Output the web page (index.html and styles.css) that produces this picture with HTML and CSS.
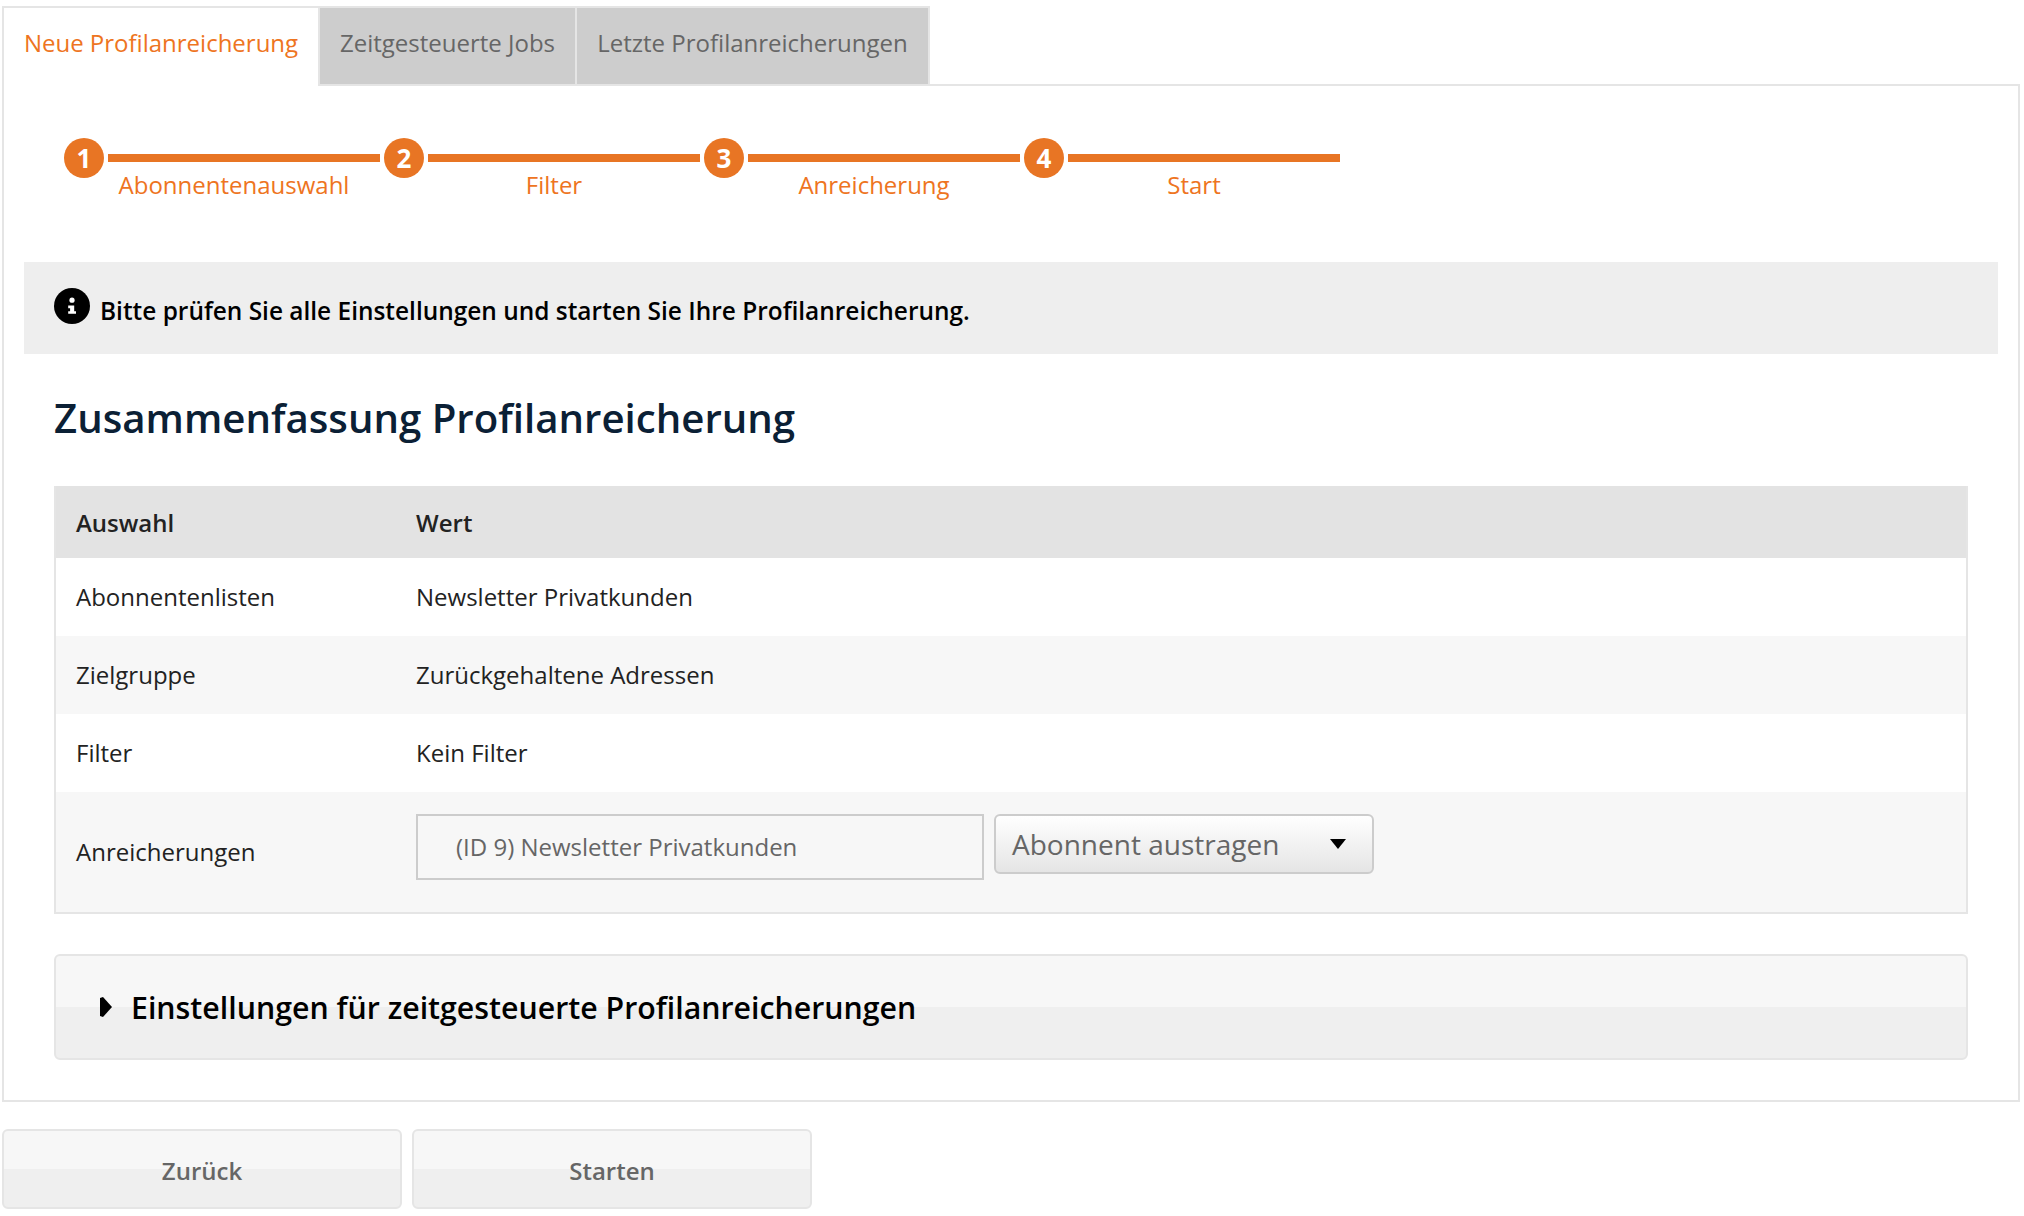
FILE: index.html
```html
<!DOCTYPE html>
<html lang="de">
<head>
    <meta charset="UTF-8">
    <title>Neue Profilanreicherung</title>
    <link rel="stylesheet" href="styles.css">
</head>
<body>
    <div class="page">
        <div class="tabs">
            <div class="tab tab-active">Neue Profilanreicherung</div>
            <div class="tab tab-second">Zeitgesteuerte Jobs</div>
            <div class="tab tab-third">Letzte Profilanreicherungen</div>
        </div>

        <div class="panel">
            <!-- Schritte -->
            <div class="steps">
                <div class="step">
                    <div class="step-head"><span class="step-num">1</span><span class="step-line"></span></div>
                    <div class="step-label">Abonnentenauswahl</div>
                </div>
                <div class="step">
                    <div class="step-head"><span class="step-num">2</span><span class="step-line"></span></div>
                    <div class="step-label">Filter</div>
                </div>
                <div class="step">
                    <div class="step-head"><span class="step-num">3</span><span class="step-line"></span></div>
                    <div class="step-label">Anreicherung</div>
                </div>
                <div class="step">
                    <div class="step-head"><span class="step-num">4</span><span class="step-line"></span></div>
                    <div class="step-label">Start</div>
                </div>
            </div>

            <div class="info">
                <svg class="info-icon" viewBox="0 0 36 36" width="36" height="36">
                    <circle cx="18" cy="18" r="18" fill="#000"/>
                    <circle cx="18" cy="12.2" r="2.6" fill="#fff"/>
                    <path d="M14.2 17.6h6v5.6h1.8v2.6h-7.8v-2.6h1.9v-3h-1.9z" fill="#fff"/>
                </svg>
                <span class="info-text">Bitte prüfen Sie alle Einstellungen und starten Sie Ihre Profilanreicherung.</span>
            </div>

            <h1 class="title">Zusammenfassung Profilanreicherung</h1>

            <table class="summary">
                <thead>
                    <tr><th class="col-name">Auswahl</th><th>Wert</th></tr>
                </thead>
                <tbody>
                    <tr><td>Abonnentenlisten</td><td>Newsletter Privatkunden</td></tr>
                    <tr class="row-alt"><td>Zielgruppe</td><td>Zurückgehaltene Adressen</td></tr>
                    <tr><td>Filter</td><td>Kein Filter</td></tr>
                    <tr class="row-alt row-last">
                        <td>Anreicherungen</td>
                        <td>
                            <div class="enrich">
                                <div class="enrich-input">(ID 9) Newsletter Privatkunden</div>
                                <div class="enrich-select">
                                    <span>Abonnent austragen</span>
                                    <svg class="caret" viewBox="0 0 16 10" width="16" height="10"><path d="M0 0h16L8 10z" fill="#000"/></svg>
                                </div>
                            </div>
                        </td>
                    </tr>
                </tbody>
            </table>

            <div class="accordion">
                <svg class="arrow" viewBox="0 0 12 20" width="12" height="20"><path d="M0 1l3-1 9 10-9 10-3-1z" fill="#000"/></svg>
                <span>Einstellungen für zeitgesteuerte Profilanreicherungen</span>
            </div>
        </div>

        <div class="actions">
            <button class="btn">Zurück</button>
            <button class="btn">Starten</button>
        </div>
    </div>
</body>
</html>
```

FILE: styles.css
```css
body {
    margin: 0;
    padding: 0;
    background-color: #fff;
    font-family: "Open Sans", sans-serif;
    font-size: 24px;
    color: #222;
}
.page {
    width: 2018px;
    margin-left: 2px;
    padding-top: 6px;
}
.tabs {
    display: flex;
    height: 78px;
}
.tab {
    box-sizing: border-box;
    height: 78px;
    line-height: 70px;
    border-top: 2px solid #e5e5e5;
    background-color: #cdcdcd;
    color: #666;
    text-align: center;
}
.tab-active {
    width: 318px;
    height: 80px;
    position: relative;
    background-color: #fff;
    color: #ee7421;
    border-left: 2px solid #e5e5e5;
    border-right: 2px solid #e5e5e5;
}
.tab-second {
    width: 257px;
    border-right: 2px solid #e5e5e5;
}
.tab-third {
    width: 353px;
    border-right: 2px solid #e5e5e5;
}
.panel {
    box-sizing: border-box;
    height: 1018px;
    border: 2px solid #e5e5e5;
    padding: 0 20px;
}
.steps {
    display: flex;
    padding: 52px 0 0 40px;
    height: 176px;
    box-sizing: border-box;
}
.step {
    width: 320px;
}
.step-head {
    display: flex;
    align-items: center;
    height: 40px;
}
.step-num {
    width: 40px;
    height: 40px;
    line-height: 40px;
    border-radius: 50%;
    background-color: #e87524;
    color: #fff;
    font-size: 26px;
    font-weight: 700;
    text-align: center;
}
.step-line {
    width: 272px;
    height: 8px;
    margin-left: 4px;
    background-color: #e87524;
}
.step-label {
    padding-left: 20px;
    color: #ee7421;
    text-align: center;
    line-height: 32px;
    margin-top: -9px;
}
.info {
    display: flex;
    align-items: flex-start;
    height: 92px;
    padding: 26px 0 0 30px;
    box-sizing: border-box;
    background-color: #eee;
}
.info-icon {
    flex: none;
    margin-right: 10px;
}
.info-text {
    margin-top: 6px;
    font-size: 24.43px;
    font-weight: 600;
    color: #000;
}
.title {
    margin: 34px 0 38px 30px;
    font-size: 40.2px;
    line-height: 60px;
    font-weight: 600;
    color: #0b2035;
}
.summary {
    width: 1914px;
    margin-left: 30px;
    border-collapse: separate;
    border-spacing: 0;
    border: 2px solid #e5e5e5;
    border-top: 0;
}
.summary th {
    height: 72px;
    padding: 0 0 0 20px;
    text-align: left;
    font-weight: 600;
    background-color: #e3e3e3;
}
.summary .col-name {
    width: 320px;
}
.summary td {
    height: 78px;
    padding: 0 0 2px 20px;
    box-sizing: border-box;
}
.row-alt td {
    background-color: #f7f7f7;
}
.summary .row-last td {
    height: 120px;
    padding-bottom: 2px;
}
.enrich {
    display: flex;
    gap: 10px;
    height: 99px;
    padding-top: 12px;
    box-sizing: border-box;
}
.enrich-input {
    box-sizing: border-box;
    width: 568px;
    height: 66px;
    padding-left: 38px;
    line-height: 62px;
    border: 2px solid #ccc;
    color: #666;
}
.enrich-select {
    box-sizing: border-box;
    display: flex;
    align-items: center;
    justify-content: space-between;
    width: 380px;
    height: 60px;
    padding: 0 26px 0 16px;
    border: 2px solid #ccc;
    border-radius: 6px;
    background: linear-gradient(#fff, #e5e5e5);
    font-size: 28px;
    color: #666;
}
.accordion {
    box-sizing: border-box;
    display: flex;
    align-items: center;
    gap: 19px;
    width: 1914px;
    height: 106px;
    margin: 40px 0 0 30px;
    padding-left: 44px;
    border: 2px solid #e5e5e5;
    border-radius: 6px;
    background: linear-gradient(#f7f7f7 50%, #efefef 50%);
    font-size: 30.3px;
    font-weight: 600;
    color: #000;
}
.actions {
    display: flex;
    gap: 10px;
    margin-top: 27px;
}
.btn {
    box-sizing: border-box;
    width: 400px;
    height: 80px;
    padding-top: 3px;
    border: 2px solid #e5e5e5;
    border-radius: 6px;
    background: linear-gradient(#f7f7f7 50%, #efefef 50%);
    font-family: "Open Sans", sans-serif;
    font-size: 24px;
    font-weight: 600;
    color: #666;
}
```
